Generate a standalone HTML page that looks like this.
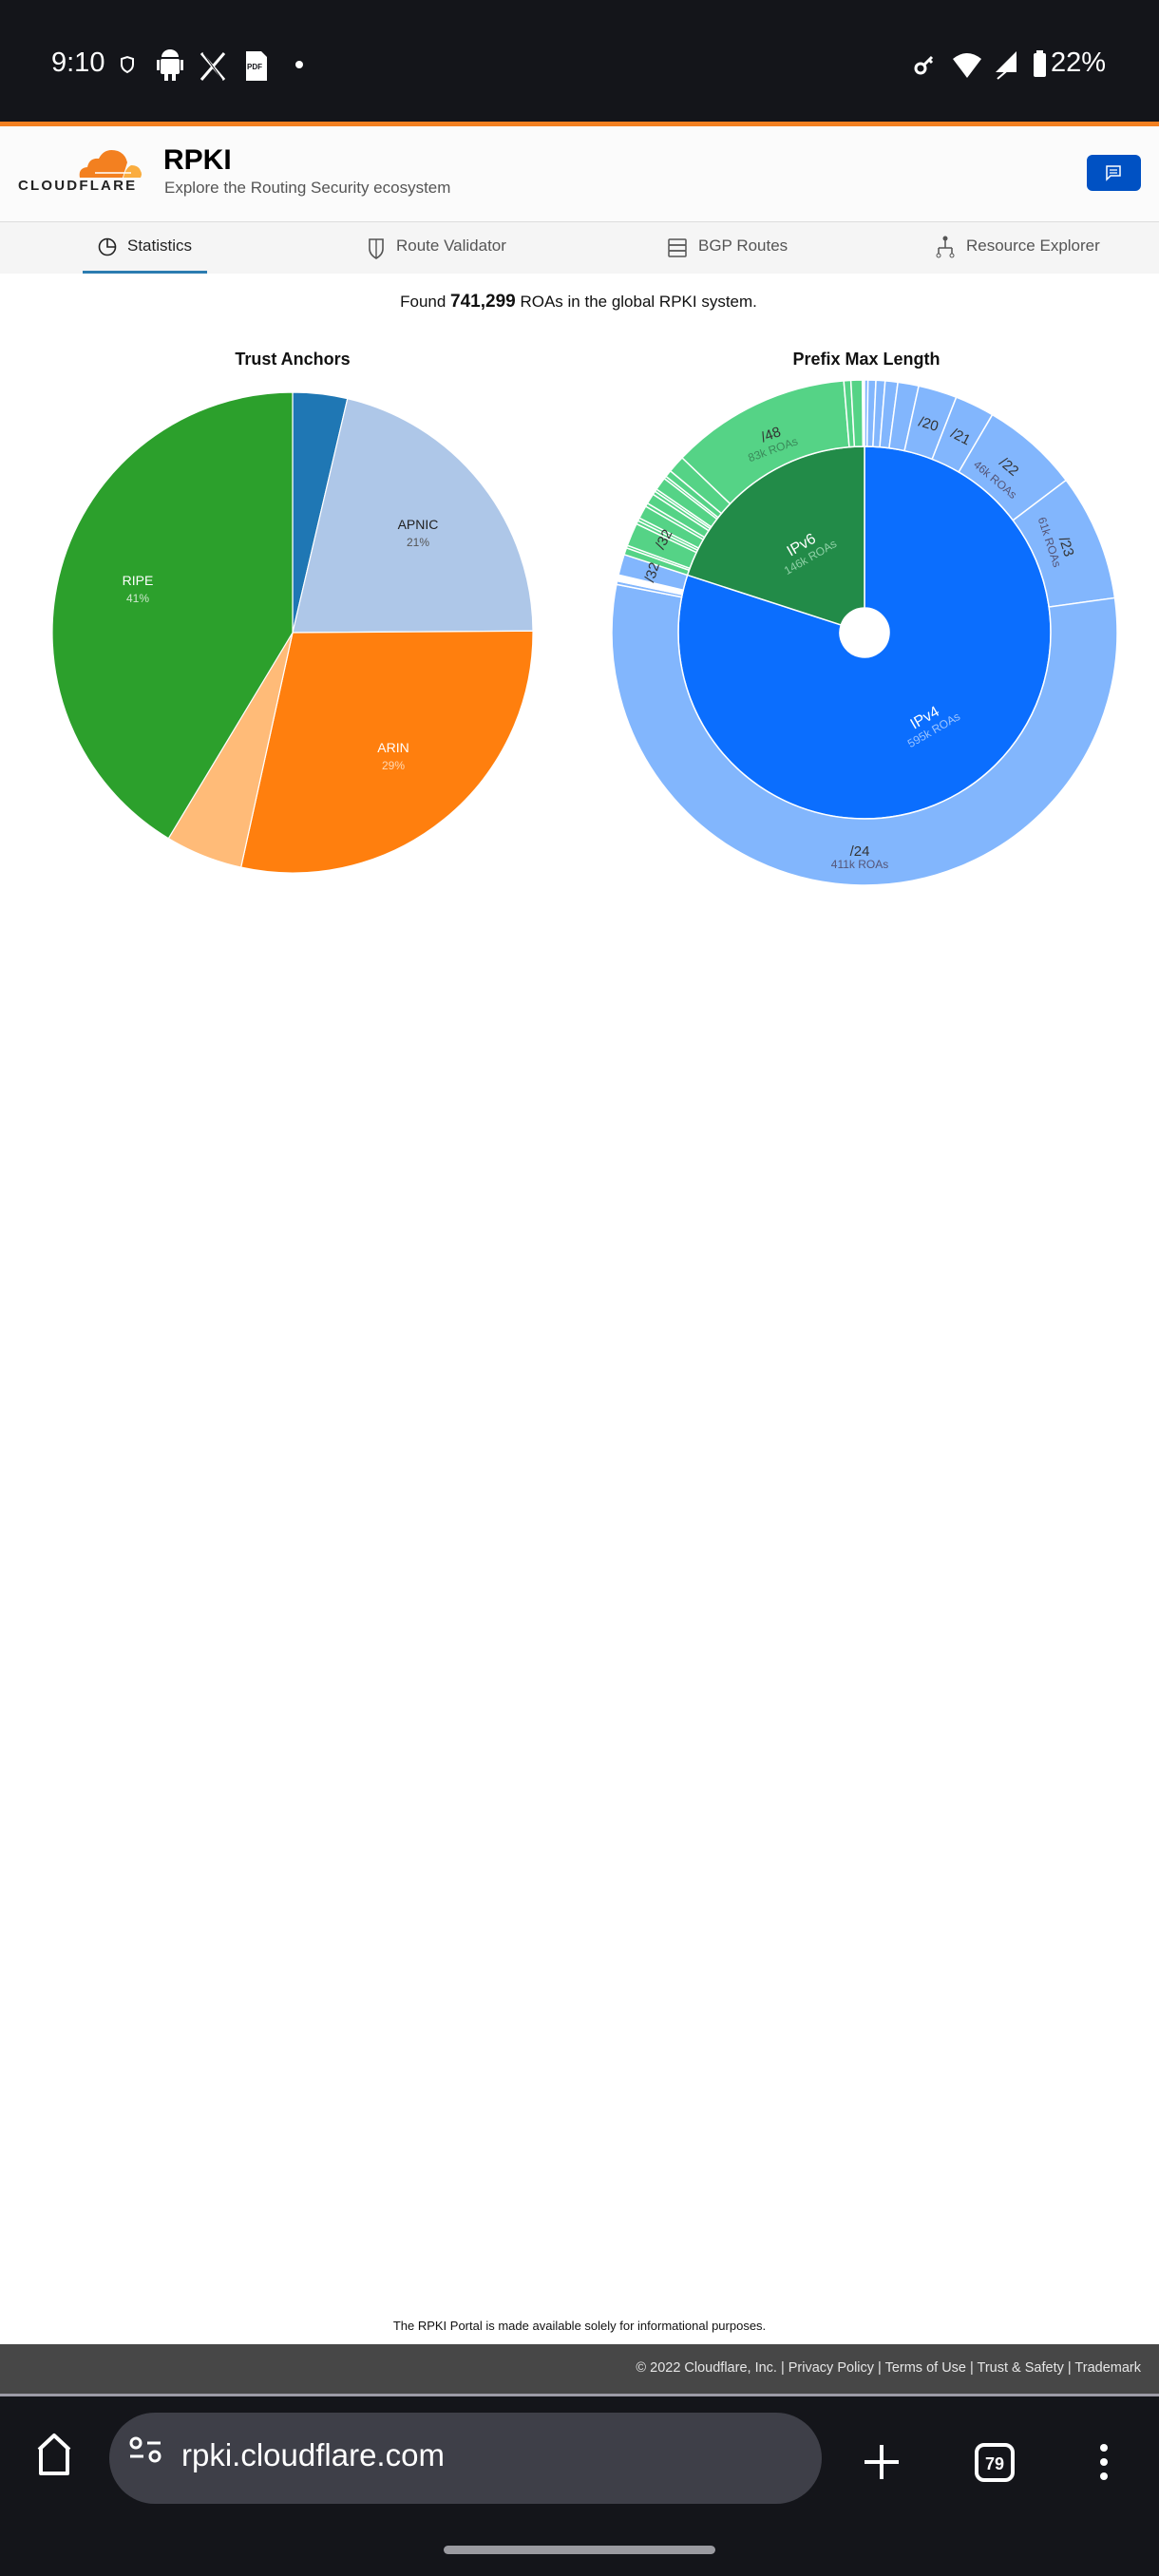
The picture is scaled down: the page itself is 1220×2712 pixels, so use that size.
<!DOCTYPE html>
<html><head><meta charset="utf-8">
<style>
*{margin:0;padding:0;box-sizing:border-box}
body{width:1220px;height:2712px;position:relative;background:#fff;font-family:"Liberation Sans",sans-serif;overflow:hidden}
.abs{position:absolute}
</style></head><body>
<!-- status bar -->
<div class="abs" style="left:0;top:0;width:1220px;height:128px;background:#14151a"></div>
<div class="abs" style="left:0;top:128px;width:1220px;height:5px;background:#f38020"></div>
<div class="abs" style="left:54px;top:50px;color:#fff;font-size:29px">9:10</div>
<svg class="abs" style="left:0;top:0" width="1220" height="128">
 <path d="M128 62 l6 -2 6 2 v6 q0 5 -6 8 q-6 -3 -6 -8z" fill="none" stroke="#fff" stroke-width="2"/>
 <rect x="169" y="62" width="20" height="16" rx="2" fill="#fff"/><path d="M170 60 a9 8 0 0 1 18 0z" fill="#fff"/>
 <rect x="173" y="77" width="4" height="8" fill="#fff"/><rect x="181" y="77" width="4" height="8" fill="#fff"/>
 <rect x="165" y="63" width="3" height="11" fill="#fff"/><rect x="190" y="63" width="3" height="11" fill="#fff"/>
 <path d="M212 56 L236 84 M236 56 L212 84" stroke="#fff" stroke-width="3"/><path d="M214 56 L234 84" stroke="#14151a" stroke-width="1"/>
 <path d="M259 54 h16 l6 6 v25 h-22z" fill="#fff"/><text x="260" y="73" font-size="8" font-weight="bold" fill="#14151a" font-family="Liberation Sans">PDF</text>
 <circle cx="315" cy="68" r="4" fill="#fff"/>
 <circle cx="969" cy="72" r="5" fill="none" stroke="#fff" stroke-width="3"/><path d="M973 68 l8 -8 m-3 3 l3 3" stroke="#fff" stroke-width="3"/>
 <path d="M1003 62 q15 -12 30 0 l-15 20z" fill="#fff"/>
 <path d="M1070 54 v22 h-22z" fill="#fff"/><path d="M1050 83 l14 -12" stroke="#fff" stroke-width="2"/>
 <rect x="1088" y="56" width="13" height="25" rx="2" fill="#fff"/><rect x="1091" y="53" width="7" height="4" fill="#fff"/>
</svg>
<div class="abs" style="left:1106px;top:50px;color:#fff;font-size:29px">22%</div>

<!-- header -->
<div class="abs" style="left:0;top:133px;width:1220px;height:101px;background:#fbfbfb"></div>
<svg class="abs" style="left:80px;top:154px" width="70" height="34" viewBox="0 0 70 34">
 <path d="M4 33 q-2 -10 8 -11 q2 -10 12 -9 q6 -12 20 -8 q8 3 10 12 l-5 16z" fill="#f38020"/>
 <path d="M50 33 q2 -10 8 -13 q8 0 10 6 q2 3 0 7z" fill="#faad3f"/>
 <path d="M20 28 h38" stroke="#fff" stroke-width="1.5"/>
</svg>
<div class="abs" style="left:19px;top:187px;font-size:15px;font-weight:bold;letter-spacing:2.2px;color:#222">CLOUDFLARE</div>
<div class="abs" style="left:172px;top:152px;font-size:30px;font-weight:bold;color:#000">RPKI</div>
<div class="abs" style="left:173px;top:188px;font-size:17px;color:#555">Explore the Routing Security ecosystem</div>
<div class="abs" style="left:1144px;top:163px;width:57px;height:38px;border-radius:6px;background:#0051c3"></div>
<svg class="abs" style="left:1162px;top:172px" width="20" height="20"><path d="M3 3 h14 v10 h-10 l-4 4z" fill="none" stroke="#fff" stroke-width="1.5"/><path d="M6 7h8M6 10h8" stroke="#fff" stroke-width="1.2"/></svg>
<div class="abs" style="left:0;top:233px;width:1220px;height:1px;background:#ddd"></div>
<!-- tabs -->
<div class="abs" style="left:0;top:234px;width:1220px;height:54px;background:#f5f5f5"></div>
<div class="abs" style="left:87px;top:285px;width:131px;height:3px;background:#2c7cb0"></div>
<svg class="abs" style="left:0;top:234px" width="1220" height="54">
 <circle cx="113" cy="26" r="8.5" fill="none" stroke="#222" stroke-width="1.6"/><path d="M113 17.5 v8.5 h8.5" fill="none" stroke="#222" stroke-width="1.6"/>
 <path d="M389 18 h14 v10 q0 6 -7 10 q-7 -4 -7 -10z" fill="none" stroke="#555" stroke-width="1.6"/><path d="M396 18 v20" stroke="#555" stroke-width="1.4"/>
 <rect x="704" y="18" width="18" height="6" rx="1" fill="none" stroke="#555" stroke-width="1.5"/><rect x="704" y="24" width="18" height="6" rx="1" fill="none" stroke="#555" stroke-width="1.5"/><rect x="704" y="30" width="18" height="6" rx="1" fill="none" stroke="#555" stroke-width="1.5"/>
 <circle cx="995" cy="17" r="2.5" fill="#555"/><path d="M995 19v8 M988 27 h14 M988 27 v6 M1002 27 v6" stroke="#555" stroke-width="1.5" fill="none"/><circle cx="988" cy="35" r="2" fill="none" stroke="#555"/><circle cx="1002" cy="35" r="2" fill="none" stroke="#555"/>
</svg>
<div class="abs" style="left:134px;top:249px;font-size:17px;color:#222">Statistics</div>
<div class="abs" style="left:417px;top:249px;font-size:17px;color:#555">Route Validator</div>
<div class="abs" style="left:735px;top:249px;font-size:17px;color:#555">BGP Routes</div>
<div class="abs" style="left:1017px;top:249px;font-size:17px;color:#555">Resource Explorer</div>

<div class="abs" style="left:0;top:307px;width:1218px;text-align:center;font-size:17px;color:#111">Found <b style="font-size:19px">741,299</b> ROAs in the global RPKI system.</div>
<div class="abs" style="left:108px;top:368px;width:400px;text-align:center;font-size:18px;font-weight:bold;color:#111">Trust Anchors</div>
<div class="abs" style="left:712px;top:368px;width:400px;text-align:center;font-size:18px;font-weight:bold;color:#111">Prefix Max Length</div>

<svg class="abs" style="left:0;top:0" width="1220" height="1000" font-family="Liberation Sans">
 <g id="pie"></g>
 <g id="sun"></g>
 <g text-anchor="middle">
  <text x="440" y="557" font-size="14" fill="#222">APNIC</text><text x="440" y="575" font-size="12" fill="#555">21%</text>
  <text x="145" y="616" font-size="14" fill="#fff">RIPE</text><text x="145" y="634" font-size="12" fill="#cfe8cf">41%</text>
  <text x="414" y="792" font-size="14" fill="#fff">ARIN</text><text x="414" y="810" font-size="12" fill="#ffd9b3">29%</text>

  <text transform="translate(813,462) rotate(-20)" font-size="15" fill="#333">/48</text>
  <text transform="translate(815,477) rotate(-20)" font-size="12" fill="#3a8a5a">83k ROAs</text>
  <text transform="translate(976,451) rotate(17)" font-size="15" fill="#333">/20</text>
  <text transform="translate(1009,464) rotate(27)" font-size="15" fill="#333">/21</text>
  <text transform="translate(1059,495) rotate(40)" font-size="15" fill="#333">/22</text>
  <text transform="translate(1045,508) rotate(40)" font-size="12" fill="#557">46k ROAs</text>
  <text transform="translate(1118,577) rotate(72)" font-size="15" fill="#333">/23</text>
  <text transform="translate(1101,572) rotate(72)" font-size="12" fill="#557">61k ROAs</text>
  <text x="905" y="901" font-size="15" fill="#333">/24</text>
  <text x="905" y="914" font-size="12" fill="#557">411k ROAs</text>
  <text transform="translate(976,760) rotate(-30)" font-size="16" fill="#fff">IPv4</text>
  <text transform="translate(985,772) rotate(-30)" font-size="12" fill="#9cc4ff">595k ROAs</text>
  <text transform="translate(846,578) rotate(-30)" font-size="16" fill="#fff">IPv6</text>
  <text transform="translate(855,590) rotate(-30)" font-size="12" fill="#8fd0a6">146k ROAs</text>
  <text transform="translate(691,604) rotate(-72)" font-size="15" fill="#333">/32</text>
  <text transform="translate(703,570) rotate(-62)" font-size="15" fill="#333">/32</text>
 </g>
</svg>

<!-- footer -->
<div class="abs" style="left:0;top:2441px;width:1220px;text-align:center;font-size:13px;color:#111">The RPKI Portal is made available solely for informational purposes.</div>
<div class="abs" style="left:0;top:2468px;width:1220px;height:52px;background:#474747"></div>
<div class="abs" style="right:19px;top:2485px;font-size:14.5px;color:#e6e6e6">© 2022 Cloudflare, Inc. | Privacy Policy | Terms of Use | Trust &amp; Safety | Trademark</div>
<div class="abs" style="left:0;top:2520px;width:1220px;height:3px;background:#9d9ba6"></div>
<div class="abs" style="left:0;top:2523px;width:1220px;height:189px;background:#14151a"></div>
<div class="abs" style="left:115px;top:2540px;width:750px;height:96px;border-radius:48px;background:#3e3f48"></div>
<div class="abs" style="left:191px;top:2566px;font-size:33px;color:#fff">rpki.cloudflare.com</div>
<svg class="abs" style="left:0;top:2523px" width="1220" height="189">
 <path d="M41 56 l16 -15 16 15 M43 54 v27 h28 v-27" fill="none" stroke="#fff" stroke-width="4" stroke-linejoin="round"/>
 <circle cx="143" cy="49" r="5" fill="none" stroke="#fff" stroke-width="3"/><path d="M155 49 h14 M137 63 h14" stroke="#fff" stroke-width="3"/><circle cx="163" cy="63" r="5" fill="none" stroke="#fff" stroke-width="3"/>
 <path d="M928 51 v36 M910 69 h36" stroke="#fff" stroke-width="4"/>
 <rect x="1028" y="51" width="38" height="37" rx="8" fill="none" stroke="#fff" stroke-width="4"/>
 <text x="1047" y="77" text-anchor="middle" font-size="18" font-weight="bold" fill="#fff" font-family="Liberation Sans">79</text>
 <circle cx="1162" cy="54" r="4" fill="#fff"/><circle cx="1162" cy="69" r="4" fill="#fff"/><circle cx="1162" cy="84" r="4" fill="#fff"/>
 <rect x="467" y="157" width="286" height="9" rx="4.5" fill="#9a9aa0"/>
</svg>

<script>
function pt(cx,cy,r,a){var t=a*Math.PI/180;return [cx+r*Math.sin(t),cy-r*Math.cos(t)];}
function arc(cx,cy,r0,r1,a0,a1){
 var l=(a1-a0)>180?1:0;var p1=pt(cx,cy,r1,a0),p2=pt(cx,cy,r1,a1);
 if(r0<=0){return "M"+cx+" "+cy+"L"+p1+"A"+r1+" "+r1+" 0 "+l+" 1 "+p2+"Z";}
 var p3=pt(cx,cy,r0,a1),p4=pt(cx,cy,r0,a0);
 return "M"+p1+"A"+r1+" "+r1+" 0 "+l+" 1 "+p2+"L"+p3+"A"+r0+" "+r0+" 0 "+l+" 0 "+p4+"Z";}
function add(g,d,f,sw){var e=document.createElementNS("http://www.w3.org/2000/svg","path");e.setAttribute("d",d);e.setAttribute("fill",f);e.setAttribute("stroke","#fff");e.setAttribute("stroke-width",sw||1.5);document.getElementById(g).appendChild(e);}
// pie
var P=[[0,13.2,"#1f77b4"],[13.2,89.6,"#aec7e8"],[89.6,192.4,"#ff7f0e"],[192.4,211.1,"#ffbb78"],[211.1,360,"#2ca02c"]];
P.forEach(function(s){add("pie",arc(308,666,0,253,s[0],s[1]),s[2],1.2);});
// sunburst
var cx=910,cy=666;
add("sun",arc(cx,cy,26,196,0,288),"#0b6efe",1.5);
add("sun",arc(cx,cy,26,196,288,360),"#228b48",1.5);
var B="#82b6fd",G="#55d386";
var O=[[0,0.8,B],[0.8,2.6,B],[2.6,4.7,B],[4.7,7.6,B],[7.6,12.4,B],[12.4,21.3,B],[21.3,30.4,B],[30.4,52.9,B],[52.9,82.1,B],[82.1,281,B],[281,281.8,B],[281.8,283.2,"#fff"],[283.2,288,B],
[288,289.6,G],[289.6,290.2,G],[290.2,295.5,G],[295.5,296.3,G],[296.3,297,G],[297,300,G],[300,300.8,G],[300.8,303.2,G],[303.2,304,G],[304,304.6,G],[304.6,307.6,G],[307.6,308.2,G],[308.2,309.8,G],[309.8,313.8,G],[313.8,355.3,G],[355.3,356.9,G],[356.9,359.5,G]];
O.forEach(function(s){add("sun",arc(cx,cy,196,266,s[0],s[1]),s[2],1.5);});
</script>
</body></html>
